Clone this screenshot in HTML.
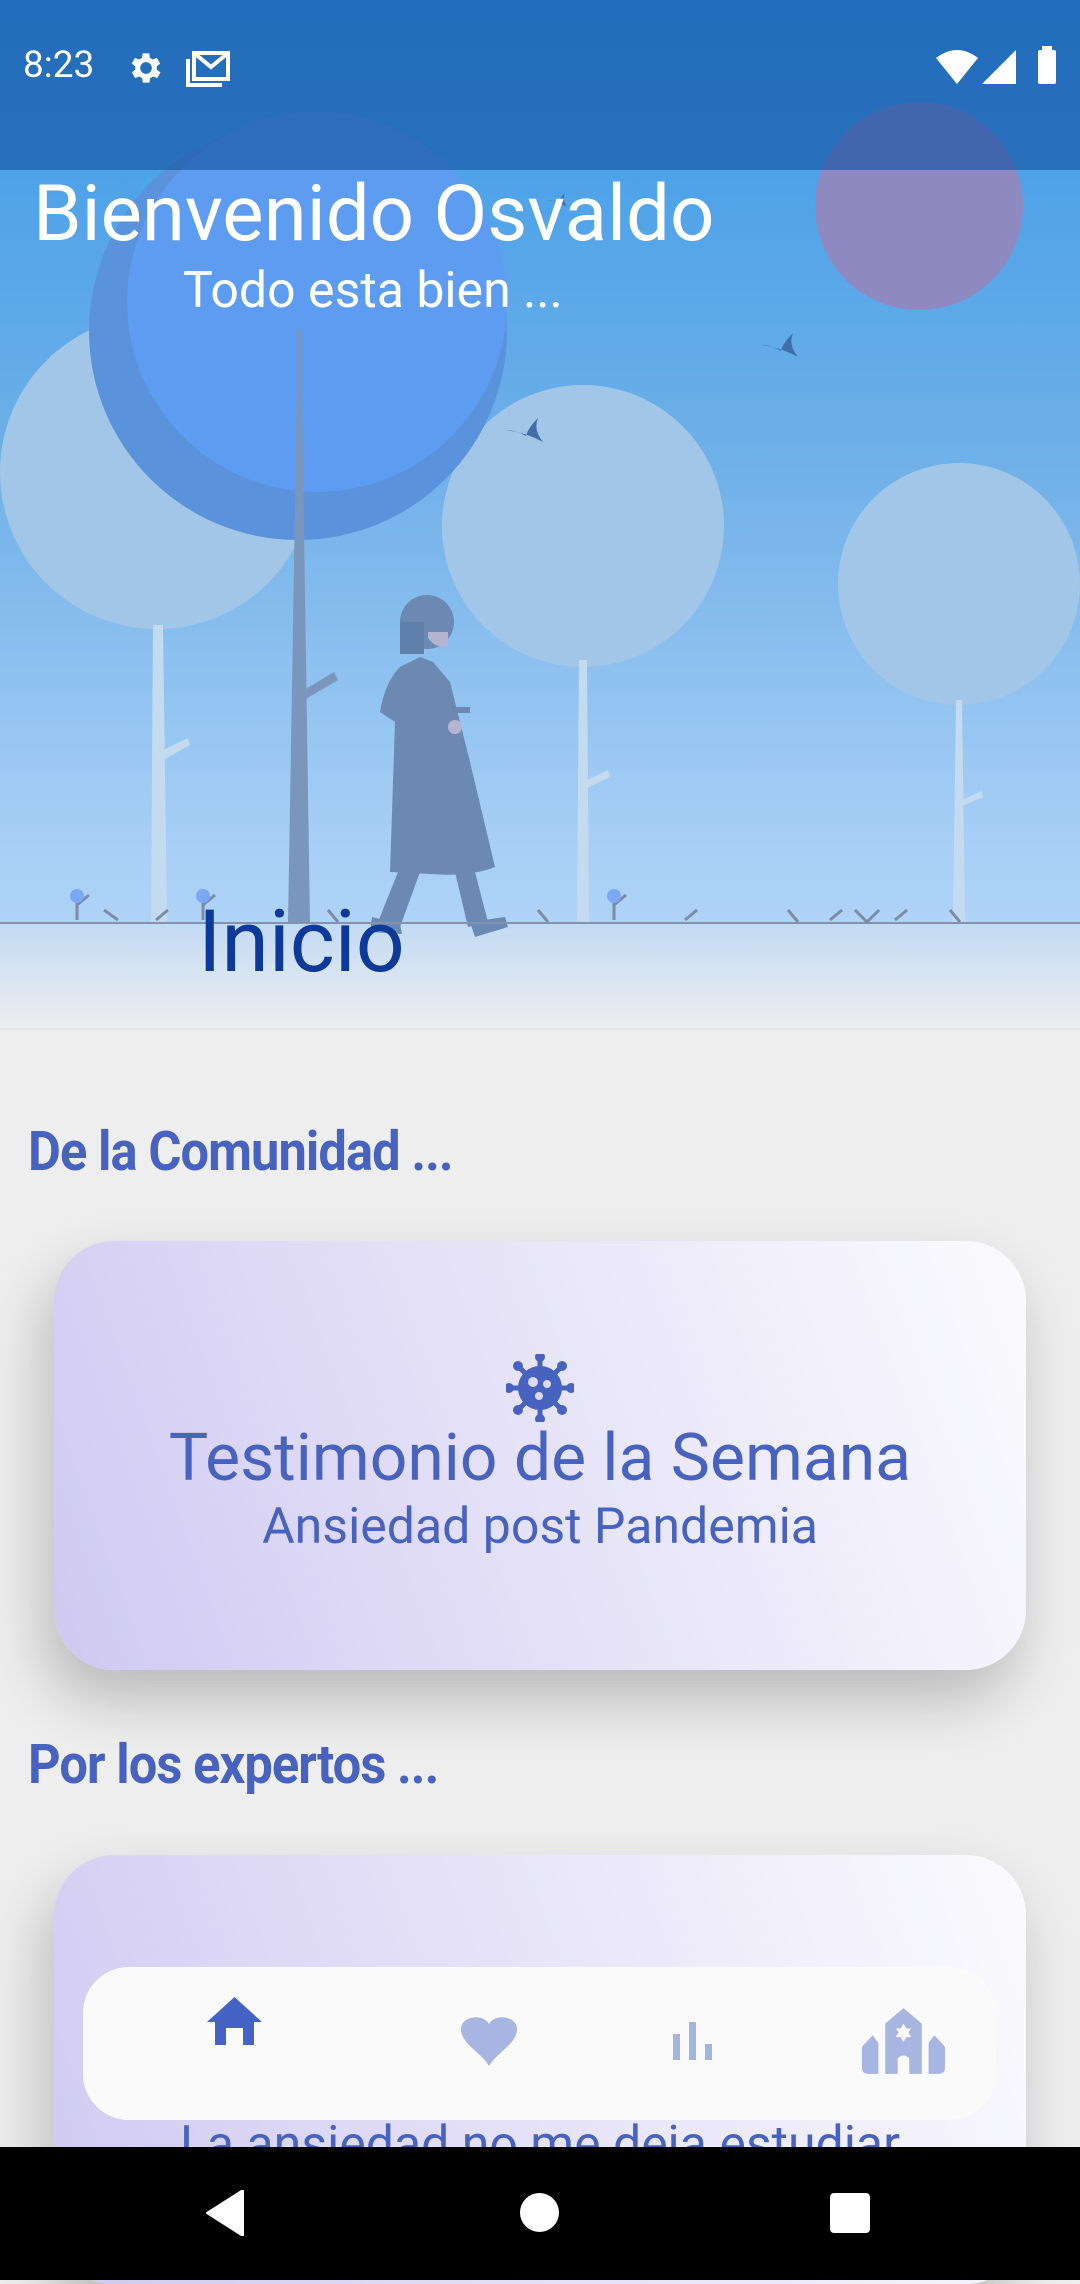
<!DOCTYPE html>
<html><head><meta charset="utf-8"><style>
*{margin:0;padding:0;box-sizing:border-box}
body{width:1080px;height:2280px;position:relative;overflow:hidden;background:#eeeeee;font-family:"Roboto","Liberation Sans",sans-serif}
.abs{position:absolute}
</style></head><body>
<svg class="abs" style="left:0;top:0" width="1080" height="1030" viewBox="0 0 1080 1030">
<defs>
<linearGradient id="sky" x1="0" y1="0" x2="0" y2="1">
<stop offset="0" stop-color="#3a9ae8"/><stop offset="0.5" stop-color="#6fb0e8"/><stop offset="0.9" stop-color="#a6cef6"/><stop offset="1" stop-color="#b0d3f7"/></linearGradient>
<linearGradient id="gr" x1="0" y1="0" x2="0" y2="1"><stop offset="0" stop-color="#c2daf4"/><stop offset="1" stop-color="#eeeeee"/></linearGradient>
</defs>
<rect width="1080" height="925" fill="url(#sky)"/>
<rect y="923" width="1080" height="107" fill="url(#gr)"/>
<g fill="#a2c6e7">
<circle cx="157" cy="472" r="157"/>
<circle cx="583" cy="526" r="141"/>
<circle cx="959" cy="584" r="121"/>
</g>
<g fill="#c4dbef">
<polygon points="153,625 163,625 167,923 151,923"/>
<polygon points="579,660 587,660 589,923 577,923"/>
<polygon points="956,700 962,700 965,923 953,923"/>
<polygon points="163,750 188,738 190,745 163,760"/>
<polygon points="587,780 608,770 610,777 587,788"/>
<polygon points="962,800 982,791 983,797 962,806"/>
</g>
<circle cx="298" cy="331" r="209" fill="#5a93dc"/>
<circle cx="317" cy="302" r="190" fill="#5d9cf0"/>
<polygon points="298,330 301,330 310,923 288,923" fill="#7b96bc"/>
<polygon points="304,690 334,672 338,680 304,700" fill="#7b96bc"/>
<circle cx="919" cy="206" r="104" fill="#8f89c2"/>
<g fill="#3f6ea8">
<path d="M760 345 q20 2 38 12 q-10 -12 -5 -24 q-10 10 -12 18 q-10 -6 -21 -6z"/>
<path d="M505 430 q20 2 38 12 q-10 -12 -5 -24 q-10 10 -12 18 q-10 -6 -21 -6z"/>
<path d="M545 200 q12 1 22 7 q-5 -7 -2 -14 q-6 6 -7 10 q-6 -3 -13 -3z"/>
</g>
<g transform="translate(0,-18)">
<g fill="#6b89b2">
<circle cx="427" cy="640" r="27"/>
<rect x="400" y="640" width="24" height="32" fill="#5f80aa"/>
<path d="M420 675 L433 680 L450 700 L470 780 L495 885 Q470 895 430 892 L390 890 L395 740 L380 730 Q385 700 400 685z"/>
<path d="M398 890 L420 890 L400 945 L378 940z"/>
<path d="M455 890 L475 890 L488 940 L468 945z"/>
<path d="M372 935 L400 942 L402 952 L370 950z"/>
<path d="M470 940 L505 935 L508 945 L475 955z"/>
<rect x="450" y="725" width="20" height="6"/>
</g>
<path d="M428 656 q6 8 12 8 l8 0 l0 -14 l-20 0z" fill="#b5b5d2"/>
<circle cx="455" cy="745" r="7" fill="#b5b5d2"/>
</g>
<rect y="922" width="1080" height="2" fill="#8592ad"/>
<g fill="none" stroke="#7e8aa6" stroke-width="3">
<path d="M77 920 V896 M77 905 l12 -10 M104 910 l14 10 M156 920 l12 -10 M203 920 V896 M203 905 l12 -10 M328 910 l10 12 M538 910 l10 12 M614 920 V896 M614 905 l12 -10 M685 920 l12 -10 M788 910 l10 12 M830 920 l12 -10 M855 910 l12 12 l12 -12 M895 920 l12 -10 M950 910 l10 12"/>
</g>
<g fill="#7aa8f5"><circle cx="77" cy="896" r="7"/><circle cx="203" cy="896" r="7"/><circle cx="614" cy="896" r="7"/></g>
<rect y="1028" width="1080" height="2" fill="#e2e4e8"/>
</svg>
<div class="abs" style="left:0;top:0;width:1080px;height:170px;background:rgba(20,80,160,0.62)"></div>
<div class="abs" style="left:23px;top:44px;color:#fff;font-size:37px">8:23</div>
<svg class="abs" style="left:126px;top:48px" width="40" height="40" viewBox="0 0 24 24"><path fill="#fff" d="M19.4 13a7.6 7.6 0 000-2l2.1-1.6-2-3.5-2.5 1a7 7 0 00-1.7-1L15 3.2h-4l-.4 2.7a7 7 0 00-1.7 1l-2.5-1-2 3.5L6.6 11a7.6 7.6 0 000 2l-2.1 1.6 2 3.5 2.5-1a7 7 0 001.7 1l.4 2.7h4l.4-2.7a7 7 0 001.7-1l2.5 1 2-3.5zM13 15.5a3.5 3.5 0 110-7 3.5 3.5 0 010 7z" transform="translate(-1 0)"/></svg>
<svg class="abs" style="left:186px;top:49px" width="44" height="38" viewBox="0 0 44 38"><path d="M8 4h34v26H8z M8 4l17 14 17-14" fill="none" stroke="#fff" stroke-width="4"/><path d="M2 10v26h34" fill="none" stroke="#fff" stroke-width="4"/></svg>
<svg class="abs" style="left:936px;top:50px" width="42" height="34" viewBox="0 0 42 34"><path d="M0 8 Q21 -8 42 8 L21 34z" fill="#fff"/></svg>
<svg class="abs" style="left:982px;top:50px" width="34" height="34"><path d="M34 0V34H0z" fill="#fff"/></svg>
<div class="abs" style="left:1038px;top:50px;width:18px;height:34px;background:#fff;border-radius:2px"></div>
<div class="abs" style="left:1042px;top:46px;width:10px;height:5px;background:#fff"></div>
<div class="abs" style="left:33px;top:170px;color:#fff;font-size:78px;line-height:90px">Bienvenido Osvaldo</div>
<div class="abs" style="left:183px;top:262px;color:#fff;font-size:50px;line-height:58px">Todo esta bien ...</div>
<div class="abs" style="left:198px;top:892px;color:#0d3a9a;font-size:86px;line-height:100px">Inicio</div>
<div class="abs" style="left:28px;top:1120px;color:#4862bf;font-size:55px;font-weight:bold;letter-spacing:-1px;transform:scaleX(0.92);transform-origin:left;white-space:nowrap">De la Comunidad ...</div>
<div class="abs" style="left:28px;top:1733px;color:#4862bf;font-size:55px;font-weight:bold;letter-spacing:-1px;transform:scaleX(0.92);transform-origin:left;white-space:nowrap">Por los expertos ...</div>
<div class="abs" style="left:54px;top:1241px;width:972px;height:429px;border-radius:60px;background:linear-gradient(70deg,#cfc9f1 0%,#e2def7 40%,#fbfbfe 100%);box-shadow:-10px 30px 60px rgba(0,0,0,0.22);text-align:center;color:#4862bf">
<svg style="position:absolute;left:452px;top:113px" width="68" height="68" viewBox="0 0 68 68"><g fill="#4862bf"><circle cx="34" cy="34" r="22"/><g stroke="#4862bf" stroke-width="5"><path d="M34 2v64M2 34h64M11 11l46 46M57 11L11 57"/></g><circle cx="34" cy="3" r="5"/><circle cx="34" cy="65" r="5"/><circle cx="3" cy="34" r="5"/><circle cx="65" cy="34" r="5"/><circle cx="12" cy="12" r="5"/><circle cx="56" cy="56" r="5"/><circle cx="56" cy="12" r="5"/><circle cx="12" cy="56" r="5"/></g><g fill="#dcdaf3"><circle cx="27" cy="28" r="5"/><circle cx="41" cy="30" r="4"/><circle cx="33" cy="42" r="4"/></g></svg>
<div style="position:absolute;left:0;width:100%;top:178px;font-size:66px;line-height:80px">Testimonio de la Semana</div>
<div style="position:absolute;left:0;width:100%;top:257px;font-size:50px;line-height:58px">Ansiedad post Pandemia</div>
</div>
<div class="abs" style="left:54px;top:1855px;width:972px;height:429px;border-radius:60px;background:linear-gradient(70deg,#cfc9f1 0%,#e2def7 40%,#fbfbfe 100%);box-shadow:-10px 30px 60px rgba(0,0,0,0.22);text-align:center;color:#4862bf">
<div style="position:absolute;left:0;width:100%;top:260px;font-size:50px;line-height:60px">La ansiedad no me deja estudiar</div>
</div>
<div class="abs" style="left:83px;top:1967px;width:913px;height:153px;border-radius:46px;background:#fafafa"></div>
<svg class="abs" style="left:207px;top:1997px" width="55" height="48" viewBox="0 0 55 48"><path d="M27.5 0 L55 25 L47 25 L47 48 L36 48 L36 31 L19 31 L19 48 L8 48 L8 25 L0 25z" fill="#4563c4"/></svg>
<svg class="abs" style="left:461px;top:2016px" width="56" height="50" viewBox="0 0 56 50"><path d="M28 50 C20 36 0 28 0 13 C0 0 22 -3 28 8 C34 -3 56 0 56 13 C56 28 36 36 28 50z" fill="#a7b6e1"/></svg>
<svg class="abs" style="left:673px;top:2022px" width="40" height="38"><g fill="#a7b6e1"><rect x="0" y="12" width="7" height="26"/><rect x="16" y="0" width="7" height="38"/><rect x="32" y="22" width="7" height="16"/></g></svg>
<svg class="abs" style="left:862px;top:2008px" width="83" height="66" viewBox="0 0 86 68"><g fill="#a7b6e1"><path d="M43 0 L62 16 L62 68 L49 68 L49 52 Q43 46 37 52 L37 68 L24 68 L24 16z"/><path d="M11 28 L17 36 L17 68 L7 68 Q0 68 0 62 L0 40z"/><path d="M75 28 L86 40 L86 62 Q86 68 79 68 L69 68 L69 36z"/></g><path d="M43 16 l3 5 h5 l-3 4 l3 5 h-5 l-3 5 l-3 -5 h-5 l3 -5 l-3 -4 h5z" fill="#fafafa"/></svg>
<div class="abs" style="left:0;top:2147px;width:1080px;height:133px;background:#000"></div>
<svg class="abs" style="left:205px;top:2190px" width="40" height="46"><path d="M38 0 V46 L2 23z" fill="#fff" stroke="#fff" stroke-width="2" stroke-linejoin="round"/></svg>
<div class="abs" style="left:520px;top:2193px;width:39px;height:39px;border-radius:50%;background:#fff"></div>
<div class="abs" style="left:830px;top:2193px;width:40px;height:40px;border-radius:4px;background:#fff"></div>
</body></html>
